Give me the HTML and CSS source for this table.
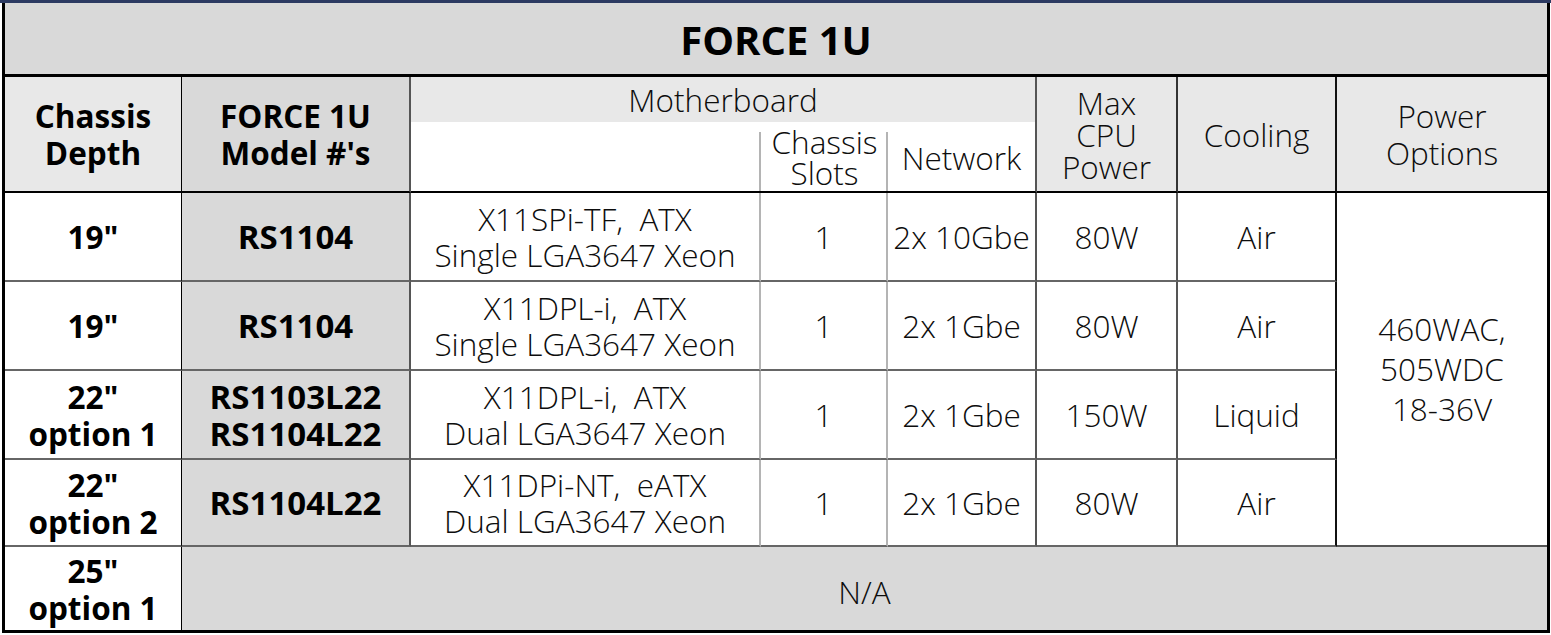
FILE: index.html
```html
<!DOCTYPE html>
<html lang="en">
<head>
<meta charset="utf-8">
<title>FORCE 1U</title>
<link rel="stylesheet" href="styles.css">
</head>
<body>
<div class="page">
  <div class="spec" role="table" aria-label="FORCE 1U">
    <div class="cell title">FORCE 1U</div>

    <div class="cell h-depth bold">Chassis<br>Depth</div>
    <div class="cell h-model bold">FORCE 1U<br>Model #'s</div>
    <div class="cell h-band">Motherboard</div>
    <div class="cell h-mobo"></div>
    <div class="cell h-slots">Chassis<br>Slots</div>
    <div class="cell h-net">Network</div>
    <div class="cell h-max">Max<br>CPU<br>Power</div>
    <div class="cell h-cool">Cooling</div>
    <div class="cell h-power">Power<br>Options</div>

    <div class="cell depth bold">19"</div>
    <div class="cell model bold">RS1104</div>
    <div class="cell mobo">X11SPi-TF,&nbsp; ATX<br>Single LGA3647 Xeon</div>
    <div class="cell slots">1</div>
    <div class="cell net">2x 10Gbe</div>
    <div class="cell max">80W</div>
    <div class="cell cool">Air</div>
    <div class="cell power">460WAC,<br>505WDC<br>18-36V</div>

    <div class="cell depth bold">19"</div>
    <div class="cell model bold">RS1104</div>
    <div class="cell mobo">X11DPL-i,&nbsp; ATX<br>Single LGA3647 Xeon</div>
    <div class="cell slots">1</div>
    <div class="cell net">2x 1Gbe</div>
    <div class="cell max">80W</div>
    <div class="cell cool">Air</div>

    <div class="cell depth bold">22"<br>option 1</div>
    <div class="cell model bold">RS1103L22<br>RS1104L22</div>
    <div class="cell mobo">X11DPL-i,&nbsp; ATX<br>Dual LGA3647 Xeon</div>
    <div class="cell slots">1</div>
    <div class="cell net">2x 1Gbe</div>
    <div class="cell max">150W</div>
    <div class="cell cool">Liquid</div>

    <div class="cell depth bold">22"<br>option 2</div>
    <div class="cell model bold">RS1104L22</div>
    <div class="cell mobo">X11DPi-NT,&nbsp; eATX<br>Dual LGA3647 Xeon</div>
    <div class="cell slots">1</div>
    <div class="cell net">2x 1Gbe</div>
    <div class="cell max">80W</div>
    <div class="cell cool">Air</div>

    <div class="cell depth last bold">25"<br>option 1</div>
    <div class="cell na">N/A</div>
  </div>
</div>
</body>
</html>
```

FILE: styles.css
```css
* { box-sizing: border-box; }

html, body {
  margin: 0;
  padding: 0;
  background: #ffffff;
}

.page {
  width: 1551px;
  height: 635px;
  border-top: 3px solid #2c3a62;
  background: #ffffff;
}

.spec {
  margin-left: 2px;
  width: 1548px;
  display: grid;
  grid-template-columns: 177px 229px 350px 127px 149px 141px 159px 210px;
  grid-template-rows: 74px 45px 71px 89px 89px 89px 87px 83px;
  border-left: 3px solid #000;
  border-right: 3px solid #000;
  border-bottom: 3px solid #000;
  font-family: "Open Sans", "Liberation Sans", sans-serif;
  font-weight: 300;
  font-size: 31.5px;
  line-height: 36px;
  color: #0d0d0d;
}

.cell {
  display: flex;
  align-items: center;
  justify-content: center;
  text-align: center;
  background: #fff;
}

.bold {
  font-weight: 700;
  font-size: 31.5px;
  line-height: 37px;
  color: #000;
}

.title {
  grid-column: 1 / -1;
  background: #d9d9d9;
  border-bottom: 3px solid #000;
  font-weight: 700;
  font-size: 40px;
  color: #000;
  padding-top: 2px;
}

.h-depth {
  grid-column: 1;
  grid-row: 2 / 4;
  background: #e8e8e8;
  border-right: 1px solid #000;
  border-bottom: 2px solid #000;
}

.h-model {
  grid-column: 2;
  grid-row: 2 / 4;
  background: #d9d9d9;
  border-right: 2px solid #555;
  border-bottom: 2px solid #000;
}

.h-band {
  grid-column: 3 / 6;
  grid-row: 2;
  background: #e8e8e8;
  border-right: 2px solid #555;
  padding-top: 1px;
}

.h-mobo,
.h-slots {
  grid-row: 3;
  border-bottom: 2px solid #000;
  background: #fff linear-gradient(#b4b4b4, #b4b4b4) no-repeat right 0 top 10px / 2px 100%;
}
.h-mobo { grid-column: 3; }
.h-slots { grid-column: 4; line-height: 31px; }

.h-net {
  grid-column: 5;
  grid-row: 3;
  border-right: 2px solid #555;
  border-bottom: 2px solid #000;
  padding-top: 2px;
}

.h-max,
.h-cool,
.h-power {
  grid-row: 2 / 4;
  background: #e8e8e8;
  border-bottom: 2px solid #000;
}
.h-max { grid-column: 6; border-right: 2px solid #333; padding-top: 1px; line-height: 32px; }
.h-cool { grid-column: 7; border-right: 2px solid #111; padding-top: 2px; }
.h-power { grid-column: 8; line-height: 37px; }

.depth,
.model,
.mobo,
.slots,
.net,
.max,
.cool {
  border-bottom: 2px solid #666;
}

.depth { grid-column: 1; border-right: 1px solid #000; }
.depth.last { border-bottom: none; }
.model { grid-column: 2; background: #d9d9d9; border-right: 2px solid #555; font-size: 33px; }
.mobo { grid-column: 3; border-right: 2px solid #b4b4b4; }
.slots { grid-column: 4; border-right: 2px solid #b4b4b4; }
.net { grid-column: 5; border-right: 2px solid #555; }
.max { grid-column: 6; border-right: 2px solid #555; }
.cool { grid-column: 7; border-right: 2px solid #111; }

.power {
  grid-column: 8;
  grid-row: 4 / 8;
  border-bottom: 2px solid #555;
  line-height: 40px;
}

.na {
  grid-column: 2 / -1;
  background: #d9d9d9;
  padding-top: 6px;
}
```
